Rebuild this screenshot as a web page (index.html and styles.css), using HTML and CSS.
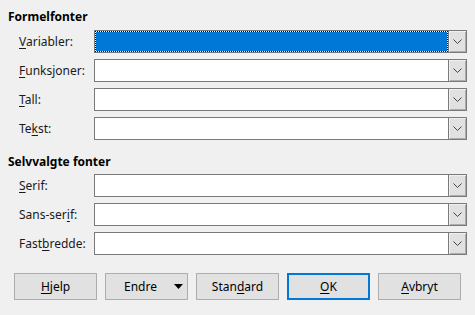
FILE: index.html
```html
<!DOCTYPE html>
<html>
<head>
<meta charset="utf-8">
<link rel="stylesheet" href="styles.css">
</head>
<body>
<div class="dialog">
  <div class="heading first">Formelfonter</div>
  <div class="grid">
    <label class="lbl"><u>V</u>ariabler:</label>
    <div class="combo focused"><div class="entry"><div class="sel"></div></div><div class="btn"><svg width="9" height="5" viewBox="0 0 9 5"><path d="M0.5 0.5 L4.5 4.5 L8.5 0.5" fill="none" stroke="#444" stroke-width="1"/></svg></div></div>
    <label class="lbl"><u>F</u>unksjoner:</label>
    <div class="combo"><div class="entry"></div><div class="btn"><svg width="9" height="5" viewBox="0 0 9 5"><path d="M0.5 0.5 L4.5 4.5 L8.5 0.5" fill="none" stroke="#444" stroke-width="1"/></svg></div></div>
    <label class="lbl"><u>T</u>all:</label>
    <div class="combo"><div class="entry"></div><div class="btn"><svg width="9" height="5" viewBox="0 0 9 5"><path d="M0.5 0.5 L4.5 4.5 L8.5 0.5" fill="none" stroke="#444" stroke-width="1"/></svg></div></div>
    <label class="lbl">Te<u>k</u>st:</label>
    <div class="combo"><div class="entry"></div><div class="btn"><svg width="9" height="5" viewBox="0 0 9 5"><path d="M0.5 0.5 L4.5 4.5 L8.5 0.5" fill="none" stroke="#444" stroke-width="1"/></svg></div></div>
  </div>
  <div class="heading second">Selvvalgte fonter</div>
  <div class="grid">
    <label class="lbl"><u>S</u>erif:</label>
    <div class="combo"><div class="entry"></div><div class="btn"><svg width="9" height="5" viewBox="0 0 9 5"><path d="M0.5 0.5 L4.5 4.5 L8.5 0.5" fill="none" stroke="#444" stroke-width="1"/></svg></div></div>
    <label class="lbl">Sans-ser<u>i</u>f:</label>
    <div class="combo"><div class="entry"></div><div class="btn"><svg width="9" height="5" viewBox="0 0 9 5"><path d="M0.5 0.5 L4.5 4.5 L8.5 0.5" fill="none" stroke="#444" stroke-width="1"/></svg></div></div>
    <label class="lbl">Fast<u>b</u>redde:</label>
    <div class="combo"><div class="entry"></div><div class="btn"><svg width="9" height="5" viewBox="0 0 9 5"><path d="M0.5 0.5 L4.5 4.5 L8.5 0.5" fill="none" stroke="#444" stroke-width="1"/></svg></div></div>
  </div>
  <div class="buttons">
    <div class="button"><span><u>H</u>jelp</span></div>
    <div class="button menu"><span class="mtext">Endre</span><svg class="tri" width="9" height="5" viewBox="0 0 9 5"><path d="M0 0 H9 L4.5 5 Z" fill="#000"/></svg></div>
    <div class="button"><span>Stan<u>d</u>ard</span></div>
    <div class="button default"><span><u>O</u>K</span></div>
    <div class="button"><span><u>A</u>vbryt</span></div>
  </div>
</div>
</body>
</html>
```
FILE: styles.css
```css
html, body {
  margin: 0;
  padding: 0;
  background: #f0f0f0;
}
body {
  width: 475px;
  height: 315px;
  font-family: "Noto Sans", "Open Sans", "Liberation Sans", sans-serif;
  font-size: 12px;
  color: #000;
}
u {
  text-decoration: underline;
  text-underline-offset: 2px;
}
.dialog {
  padding: 9px 8px 0 8px;
}
.heading {
  font-weight: bold;
  height: 16px;
  line-height: 16px;
}
.first { margin-bottom: 5px; }
.second { margin-top: 14px; margin-bottom: 4px; }
.grid {
  display: grid;
  grid-template-columns: 75px 373px;
  grid-auto-rows: 23px;
  row-gap: 6px;
  padding-left: 11px;
}
.lbl {
  line-height: 23px;
  color: #1a1a1a;
}
.combo {
  display: flex;
  height: 23px;
  box-sizing: border-box;
  border: 1px solid #7a7a7a;
  background: #fff;
}
.entry {
  flex: 1;
  padding: 1px;
}
.focused .entry {
  background: #fff;
  padding: 0;
}
.sel {
  height: 100%;
  box-sizing: border-box;
  border: 1px dotted #000;
  background: #0078d7;
  background-clip: padding-box;
}
.btn {
  width: 18px;
  box-sizing: border-box;
  border-left: 1px solid #7a7a7a;
  background: #e1e1e1;
  display: flex;
  align-items: center;
  justify-content: center;
  box-shadow: inset 1px 1px 0 #f0f0f0, inset -1px -1px 0 #adadad;
}
.buttons {
  display: flex;
  gap: 8px;
  margin-top: 18px;
  padding-left: 6px;
}
.button {
  width: 83px;
  height: 27px;
  box-sizing: border-box;
  border: 1px solid #adadad;
  background: #e1e1e1;
  display: flex;
  align-items: center;
  justify-content: center;
  color: #000;
}
.button.default {
  border: 2px solid #0078d7;
}
.button.menu {
  position: relative;
  justify-content: flex-start;
  padding-left: 18px;
}
.tri {
  position: absolute;
  left: 68px;
  top: 10px;
}
```
